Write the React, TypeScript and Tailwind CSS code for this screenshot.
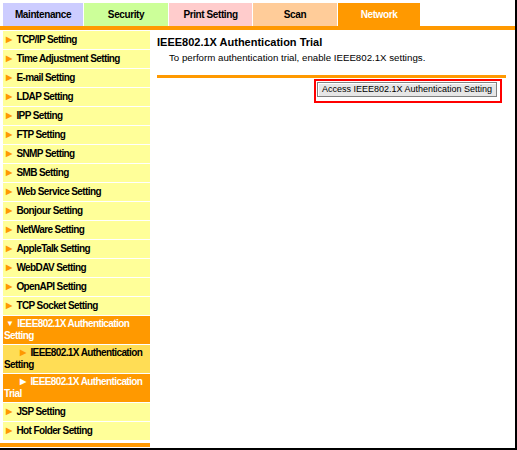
import React from "react";

const TABS = [
  { label: "Maintenance", cls: "bg-[#ccccff] text-black w-[81px]" },
  { label: "Security", cls: "bg-[#ccff99] text-black w-[85px]" },
  { label: "Print Setting", cls: "bg-[#ffcccc] text-black w-[84px]" },
  { label: "Scan", cls: "bg-[#ffcc99] text-black w-[85px]" },
  { label: "Network", cls: "bg-[#ff9900] text-white w-[83px]" },
];

const TOP_ITEMS = [
  "TCP/IP Setting",
  "Time Adjustment Setting",
  "E-mail Setting",
  "LDAP Setting",
  "IPP Setting",
  "FTP Setting",
  "SNMP Setting",
  "SMB Setting",
  "Web Service Setting",
  "Bonjour Setting",
  "NetWare Setting",
  "AppleTalk Setting",
  "WebDAV Setting",
  "OpenAPI Setting",
  "TCP Socket Setting",
];

const BOTTOM_ITEMS = ["JSP Setting", "Hot Folder Setting"];

function Arrow({ white }: { white?: boolean }) {
  return (
    <span
      className={`mr-[5px] inline-block align-[1px] text-[8px] leading-[8px] ${
        white ? "text-white" : "text-[#ff9900]"
      }`}
    >
      ▶
    </span>
  );
}

function MenuItem({ label }: { label: string }) {
  return (
    <div className="mb-px flex h-[18px] items-center bg-[#ffff99] pl-[3px]">
      <Arrow />
      <span>{label}</span>
    </div>
  );
}

export default function App() {
  return (
    <div
      className="box-border h-[450px] w-[517px] overflow-hidden border-b-2 border-r-2 border-black bg-white pl-[3px] pt-[3px]"
      style={{ fontFamily: '"Liberation Sans", Arial, sans-serif' }}
    >
      <nav className="flex h-[23px] text-[10px] font-bold tracking-[-0.4px]">
        {TABS.map((t) => (
          <div key={t.label} className={`flex items-center justify-center border-r border-white ${t.cls}`}>
            {t.label}
          </div>
        ))}
      </nav>
      <div className="-ml-[3px] h-[4px] bg-[#ff9900]" />

      <div className="flex">
        <aside className="w-[147px] pt-px text-[10px] font-bold leading-[12px] tracking-[-0.6px] text-black">
          {TOP_ITEMS.map((l) => (
            <MenuItem key={l} label={l} />
          ))}
          <div className="mb-px bg-[#ff9900] px-px py-[2px] text-white">
            <span className="ml-[2px] mr-[4px] inline-block align-[1px] text-[8px] leading-[8px]">▼</span>
            IEEE802.1X Authentication Setting
          </div>
          <div className="mb-px bg-[#ffdd55] px-px py-[2px]">
            <span className="ml-[16px]" />
            <Arrow />
            IEEE802.1X Authentication Setting
          </div>
          <div className="mb-px bg-[#ff9900] px-px py-[2px] text-white">
            <span className="ml-[16px]" />
            <Arrow white />
            IEEE802.1X Authentication Trial
          </div>
          {BOTTOM_ITEMS.map((l) => (
            <MenuItem key={l} label={l} />
          ))}
          <div className="-ml-[3px] mt-[3px] h-[4px] w-[150px] bg-[#ff9900]" />
        </aside>

        <main className="flex-1 pl-[7px] pr-[9px] pt-[5px]">
          <h1 className="text-[11px] font-bold leading-[14px] text-black">IEEE802.1X Authentication Trial</h1>
          <p className="mt-[2px] pl-[12px] text-[9.7px] leading-[14px] text-black">
            To perform authentication trial, enable IEEE802.1X settings.
          </p>
          <div className="mt-[10px] h-[3px] bg-[#ff9900]" />
          <div className="flex justify-end pr-[4px] pt-px">
            <div className="flex border-2 border-[#ff0000] pb-[4px] pl-px pr-[3px] pt-px">
              <button className="h-[15px] border border-[#808080] bg-[#e6e6e6] px-[4px] text-[9px] leading-[11px] text-black shadow-[inset_1px_1px_0_#ffffff]">
                Access IEEE802.1X Authentication Setting
              </button>
            </div>
          </div>
        </main>
      </div>
    </div>
  );
}
